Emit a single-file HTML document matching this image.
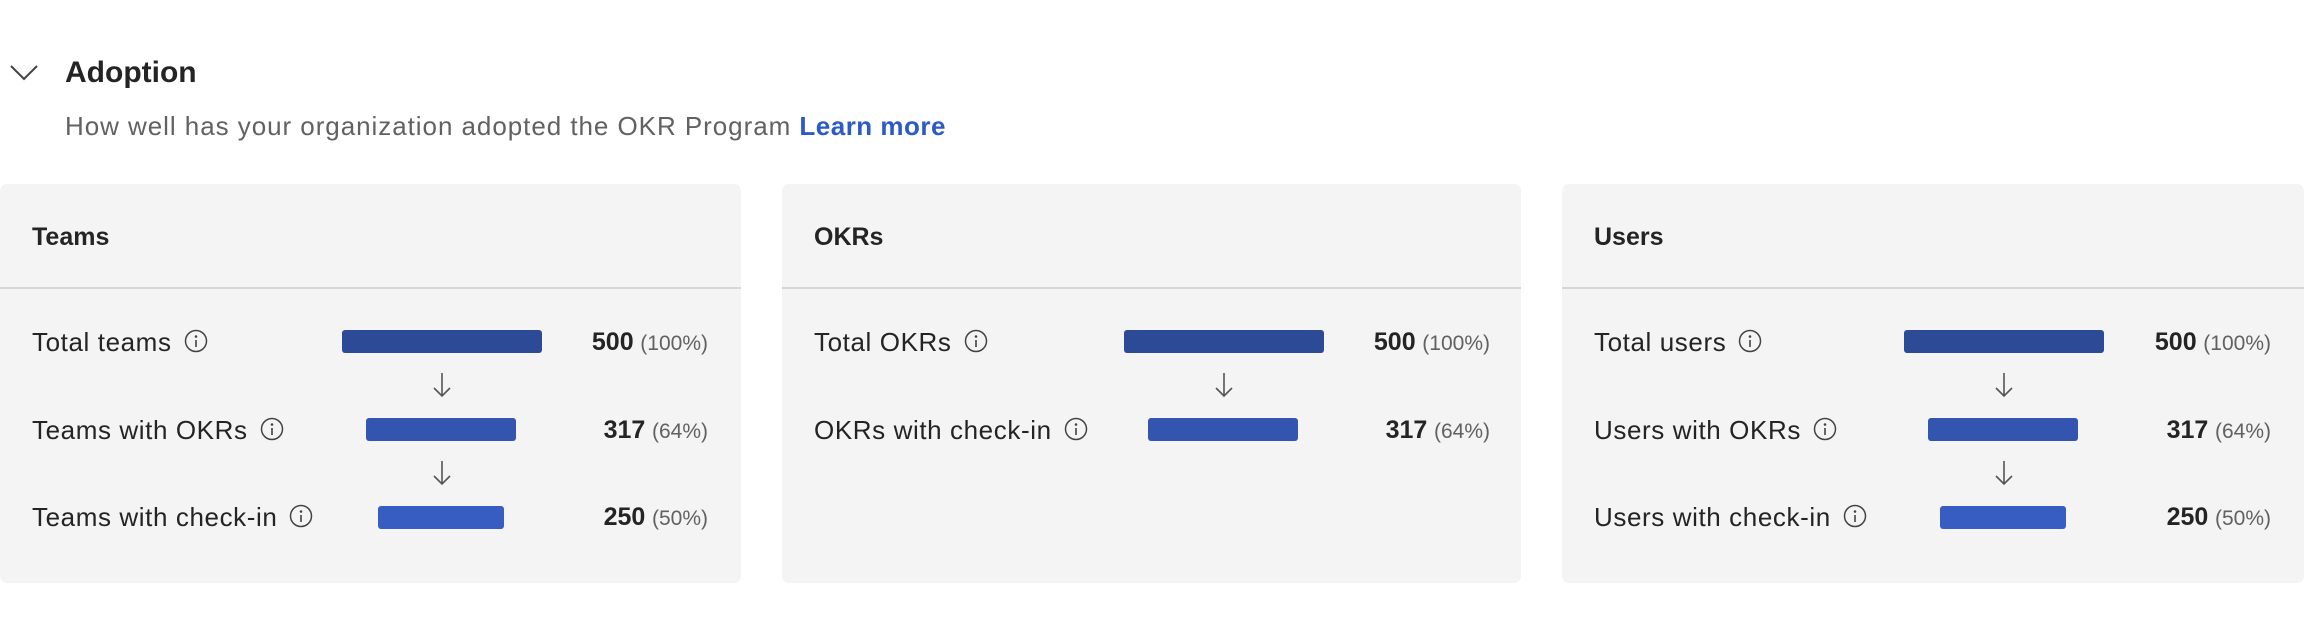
<!DOCTYPE html>
<html><head><meta charset="utf-8"><style>
*{margin:0;padding:0;box-sizing:border-box}
body{width:2304px;height:634px;background:#fff;font-family:"Liberation Sans",sans-serif;position:relative;overflow:hidden;color:#242424}
.a{position:absolute;white-space:nowrap}
.card{position:absolute;top:184px;height:399px;background:#f4f4f4;border-radius:7px}
.hd{position:absolute;left:32px;top:222px;font-size:25px;font-weight:bold;line-height:30px}
.div{position:absolute;left:0;right:0;top:287px;height:2px;background:#d6d6d6}
.lbl{position:absolute;left:32px;font-size:26px;letter-spacing:0.6px;line-height:30px;color:#242424}
.lbl svg{vertical-align:-2px;margin-left:12px}
.bar{position:absolute;height:23px;border-radius:3px}
.num{position:absolute;right:33px;font-size:24px;line-height:30px;text-align:right}
.num b{font-size:25px}
.num span{color:#616161;font-size:21px}
.arr{position:absolute;width:20px;height:26px}
</style></head><body>
<svg class="a" style="left:9px;top:63px" width="30" height="20" viewBox="0 0 30 20"><path d="M2 3 L15 16 L28 3" fill="none" stroke="#424242" stroke-width="2"/></svg>
<div class="a" style="left:65px;top:55px;font-size:30px;font-weight:bold;line-height:36px">Adoption</div>
<div class="a" style="left:65px;top:111px;font-size:26px;letter-spacing:0.95px;line-height:30px;color:#616161">How well has your organization adopted the OKR Program <b style="color:#2b5bc4;letter-spacing:0.5px">Learn more</b></div>

<div class="card" style="left:0;width:741px"></div>
<div class="card" style="left:782px;width:739px"></div>
<div class="card" style="left:1562px;width:742px"></div>

<div class="a" style="left:0;top:0;width:741px;height:634px">
<div class="hd">Teams</div><div class="div" style="width:741px;top:287px"></div>
<div class="lbl" style="top:327px">Total teams<svg width="24" height="24" viewBox="0 0 24 24"><circle cx="12" cy="12" r="10.5" fill="none" stroke="#424242" stroke-width="1.5"/><circle cx="12" cy="7.5" r="1.3" fill="#424242"/><path d="M12 11v7" stroke="#424242" stroke-width="1.6"/></svg></div>
<div class="bar" style="left:342px;width:200px;top:330px;background:#2c4a96"></div>
<div class="num" style="top:327px"><b>500</b> <span>(100%)</span></div>
<svg class="arr" style="left:432px;top:372px" viewBox="0 0 20 26"><path d="M10 1v23M2 16l8 8 8-8" fill="none" stroke="#555" stroke-width="1.6"/></svg>
<div class="lbl" style="top:415px">Teams with OKRs<svg width="24" height="24" viewBox="0 0 24 24"><circle cx="12" cy="12" r="10.5" fill="none" stroke="#424242" stroke-width="1.5"/><circle cx="12" cy="7.5" r="1.3" fill="#424242"/><path d="M12 11v7" stroke="#424242" stroke-width="1.6"/></svg></div>
<div class="bar" style="left:366px;width:150px;top:418px;background:#3355b0"></div>
<div class="num" style="top:415px"><b>317</b> <span>(64%)</span></div>
<svg class="arr" style="left:432px;top:460px" viewBox="0 0 20 26"><path d="M10 1v23M2 16l8 8 8-8" fill="none" stroke="#555" stroke-width="1.6"/></svg>
<div class="lbl" style="top:502px">Teams with check-in<svg width="24" height="24" viewBox="0 0 24 24"><circle cx="12" cy="12" r="10.5" fill="none" stroke="#424242" stroke-width="1.5"/><circle cx="12" cy="7.5" r="1.3" fill="#424242"/><path d="M12 11v7" stroke="#424242" stroke-width="1.6"/></svg></div>
<div class="bar" style="left:378px;width:126px;top:506px;background:#385dc2"></div>
<div class="num" style="top:502px"><b>250</b> <span>(50%)</span></div>
</div>

<div class="a" style="left:782px;top:0;width:739px;height:634px">
<div class="hd">OKRs</div><div class="div" style="width:739px"></div>
<div class="lbl" style="top:327px">Total OKRs<svg width="24" height="24" viewBox="0 0 24 24"><circle cx="12" cy="12" r="10.5" fill="none" stroke="#424242" stroke-width="1.5"/><circle cx="12" cy="7.5" r="1.3" fill="#424242"/><path d="M12 11v7" stroke="#424242" stroke-width="1.6"/></svg></div>
<div class="bar" style="left:342px;width:200px;top:330px;background:#2c4a96"></div>
<div class="num" style="top:327px;right:31px"><b>500</b> <span>(100%)</span></div>
<svg class="arr" style="left:432px;top:372px" viewBox="0 0 20 26"><path d="M10 1v23M2 16l8 8 8-8" fill="none" stroke="#555" stroke-width="1.6"/></svg>
<div class="lbl" style="top:415px">OKRs with check-in<svg width="24" height="24" viewBox="0 0 24 24"><circle cx="12" cy="12" r="10.5" fill="none" stroke="#424242" stroke-width="1.5"/><circle cx="12" cy="7.5" r="1.3" fill="#424242"/><path d="M12 11v7" stroke="#424242" stroke-width="1.6"/></svg></div>
<div class="bar" style="left:366px;width:150px;top:418px;background:#3355b0"></div>
<div class="num" style="top:415px;right:31px"><b>317</b> <span>(64%)</span></div>
</div>

<div class="a" style="left:1562px;top:0;width:742px;height:634px">
<div class="hd">Users</div><div class="div" style="width:742px"></div>
<div class="lbl" style="top:327px">Total users<svg width="24" height="24" viewBox="0 0 24 24"><circle cx="12" cy="12" r="10.5" fill="none" stroke="#424242" stroke-width="1.5"/><circle cx="12" cy="7.5" r="1.3" fill="#424242"/><path d="M12 11v7" stroke="#424242" stroke-width="1.6"/></svg></div>
<div class="bar" style="left:342px;width:200px;top:330px;background:#2c4a96"></div>
<div class="num" style="top:327px"><b>500</b> <span>(100%)</span></div>
<svg class="arr" style="left:432px;top:372px" viewBox="0 0 20 26"><path d="M10 1v23M2 16l8 8 8-8" fill="none" stroke="#555" stroke-width="1.6"/></svg>
<div class="lbl" style="top:415px">Users with OKRs<svg width="24" height="24" viewBox="0 0 24 24"><circle cx="12" cy="12" r="10.5" fill="none" stroke="#424242" stroke-width="1.5"/><circle cx="12" cy="7.5" r="1.3" fill="#424242"/><path d="M12 11v7" stroke="#424242" stroke-width="1.6"/></svg></div>
<div class="bar" style="left:366px;width:150px;top:418px;background:#3355b0"></div>
<div class="num" style="top:415px"><b>317</b> <span>(64%)</span></div>
<svg class="arr" style="left:432px;top:460px" viewBox="0 0 20 26"><path d="M10 1v23M2 16l8 8 8-8" fill="none" stroke="#555" stroke-width="1.6"/></svg>
<div class="lbl" style="top:502px">Users with check-in<svg width="24" height="24" viewBox="0 0 24 24"><circle cx="12" cy="12" r="10.5" fill="none" stroke="#424242" stroke-width="1.5"/><circle cx="12" cy="7.5" r="1.3" fill="#424242"/><path d="M12 11v7" stroke="#424242" stroke-width="1.6"/></svg></div>
<div class="bar" style="left:378px;width:126px;top:506px;background:#385dc2"></div>
<div class="num" style="top:502px"><b>250</b> <span>(50%)</span></div>
</div>
</body></html>
